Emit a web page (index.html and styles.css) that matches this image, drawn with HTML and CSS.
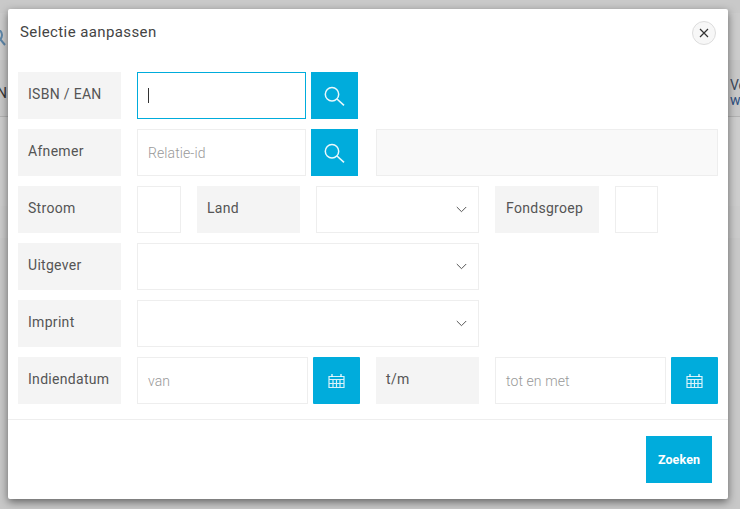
FILE: index.html
```html
<!DOCTYPE html>
<html lang="nl">
<head>
<meta charset="utf-8">
<title>Selectie aanpassen</title>
<link rel="stylesheet" href="styles.css">
</head>
<body>
<div class="page">
  <div class="bg-top"></div>
  <div class="bg-search"><svg class="bg-icon" width="8" height="18" viewBox="0 0 8 18"><circle cx="-4" cy="5" r="6" fill="none" stroke="#5d86a8" stroke-width="2"/><path d="M0 9l5 6" stroke="#5d86a8" stroke-width="2"/></svg></div>
  <div class="bg-gap"></div>
  <div class="bg-band"><span class="bg-n">N</span><span class="bg-v">Ve<br><b>w</b></span></div>
  <div class="bg-mid"></div>
  <div class="bg-line"></div>
  <div class="bg-rest"></div>
</div>
<div class="modal">
  <header class="head">
    <h1 class="title">Selectie aanpassen</h1>
    <button class="close" aria-label="Sluiten"><svg width="10" height="10" viewBox="0 0 10 10"><path d="M1 1l8 8M9 1l-8 8" stroke="#333" stroke-width="1.2"/></svg></button>
  </header>
  <div class="body">
    <div class="row">
      <div class="label">ISBN / EAN</div>
      <div class="input focus w169"><span class="caret"></span></div>
      <button class="btn gap5"><svg class="i-search" width="22" height="22" viewBox="0 0 22 22"><circle cx="8" cy="9.3" r="6.7" fill="none" stroke="#eaf8fc" stroke-width="1.5"/><path d="M13 14l7 6.3" stroke="#eaf8fc" stroke-width="1.6"/></svg></button>
    </div>
    <div class="row">
      <div class="label">Afnemer</div>
      <div class="input w169"><span class="ph">Relatie-id</span></div>
      <button class="btn gap5"><svg class="i-search" width="22" height="22" viewBox="0 0 22 22"><circle cx="8" cy="9.3" r="6.7" fill="none" stroke="#eaf8fc" stroke-width="1.5"/><path d="M13 14l7 6.3" stroke="#eaf8fc" stroke-width="1.6"/></svg></button>
      <div class="input readonly"></div>
    </div>
    <div class="row">
      <div class="label">Stroom</div>
      <div class="input w44"></div>
      <div class="label">Land</div>
      <div class="input select w163"><svg width="11" height="7" viewBox="0 0 11 7"><path d="M.8 1l4.7 4.7L10.2 1" fill="none" stroke="#555" stroke-width="1"/></svg></div>
      <div class="label wide">Fondsgroep</div>
      <div class="input w43"></div>
    </div>
    <div class="row">
      <div class="label">Uitgever</div>
      <div class="input select w342"><svg width="11" height="7" viewBox="0 0 11 7"><path d="M.8 1l4.7 4.7L10.2 1" fill="none" stroke="#555" stroke-width="1"/></svg></div>
    </div>
    <div class="row">
      <div class="label">Imprint</div>
      <div class="input select w342"><svg width="11" height="7" viewBox="0 0 11 7"><path d="M.8 1l4.7 4.7L10.2 1" fill="none" stroke="#555" stroke-width="1"/></svg></div>
    </div>
    <div class="row">
      <div class="label">Indiendatum</div>
      <div class="input w171"><span class="ph">van</span></div>
      <button class="btn gap5 rounded"><svg width="17" height="14" viewBox="0 0 17 14"><path d="M1 2.5h15v11H1zM1 5.5h15M1 9.5h15M5 5.5v8M8.5 5.5v8M12 5.5v8" fill="none" stroke="#d8f2fa" stroke-width="1.2"/><path d="M4 0v3M13 0v3" stroke="#fff" stroke-width="1.2"/></svg></button>
      <div class="label">t/m</div>
      <div class="input w171"><span class="ph">tot en met</span></div>
      <button class="btn gap5 rounded"><svg width="17" height="14" viewBox="0 0 17 14"><path d="M1 2.5h15v11H1zM1 5.5h15M1 9.5h15M5 5.5v8M8.5 5.5v8M12 5.5v8" fill="none" stroke="#d8f2fa" stroke-width="1.2"/><path d="M4 0v3M13 0v3" stroke="#fff" stroke-width="1.2"/></svg></button>
    </div>
  </div>
  <footer class="foot"><button class="submit">Zoeken</button></footer>
</div>
</body>
</html>
```
FILE: styles.css
```css
* { box-sizing: border-box; }
html, body { margin: 0; height: 100%; overflow: hidden; background: #cccccc; font-family: Roboto, "Liberation Sans", sans-serif; }
.page { width: 740px; height: 509px; display: flex; flex-direction: column; }
.bg-top { height: 13px; background: #c9c9c9; }
.bg-search { height: 47px; background: #cccccc; overflow: hidden; }
.bg-icon { display: block; margin-top: 17px; }
.bg-gap { height: 10px; background: #c7c7c7; }
.bg-band { height: 47px; background: #c8c8c8; border-bottom: 1px solid #b2b2b2; display: flex; justify-content: space-between; align-items: center; font-size: 14px; line-height: 15px; color: #333; }
.bg-n { margin-left: -3px; }
.bg-v { width: 10px; overflow: hidden; color: #3d4a5c; white-space: nowrap; }
.bg-v b { font-weight: 400; color: #2d4f80; }
.bg-mid { height: 89px; background: #cdcdcd; }
.bg-line { height: 32px; background: #cbcbcb; }
.bg-rest { flex: 1; background: #c8c8c8; }

.modal { position: absolute; left: 8px; top: 9px; width: 720px; height: 490px; background: #fff; border-radius: 2px; box-shadow: 0 3px 9px rgba(0,0,0,.5); display: flex; flex-direction: column; }
.head { height: 63px; padding: 13px 12px 0 12px; display: flex; justify-content: space-between; align-items: flex-start; }
.title { margin: 0; font-size: 15px; font-weight: 400; line-height: 20px; letter-spacing: .4px; color: #444; }
.close { width: 24px; height: 24px; margin-top: -1px; padding: 0; border: 1px solid #ddd; border-radius: 50%; background: #f7f7f7; display: flex; align-items: center; justify-content: center; }
.body { padding: 0 10px; display: flex; flex-direction: column; gap: 10px; height: 348px; border-bottom: 1px solid #eee; }
.row { display: flex; height: 47px; }
.label { width: 103px; margin-right: 16px; padding: 14px 0 0 10px; background: #f4f4f4; font-size: 14px; line-height: 16px; font-weight: 400; letter-spacing: .3px; color: #555; white-space: nowrap; }
.row > .input + .label, .row > .btn + .label { margin-left: 16px; }
.wide { width: 104px; padding-left: 11px; }
.input { height: 47px; border: 1px solid #eee; background: #fff; padding: 0 10px; display: flex; align-items: center; }
.w169 { width: 169px; }
.w171 { width: 171px; }
.w44 { width: 44px; }
.w43 { width: 43px; }
.w163 { width: 163px; }
.w342 { width: 342px; }
.focus { border-color: #00acdc; }
.caret { width: 1px; height: 15px; background: #333; }
.ph { font-size: 14px; font-weight: 300; color: #999; letter-spacing: .1px; }
.readonly { flex: 1; margin-left: 18px; background: #f9f9f9; }
.select { justify-content: flex-end; padding-right: 11px; }
.btn { width: 47px; height: 47px; border: 0; padding: 0; background: #00acdc; display: flex; align-items: center; justify-content: center; }
.gap5 { margin-left: 5px; }
.rounded { border-radius: 1px; }
.foot { flex: 1; display: flex; justify-content: flex-end; padding: 16px 16px 0 0; }
.submit { width: 66px; height: 47px; padding: 0; border: 0; background: #00acdc; color: #fff; font: 700 12.5px Roboto, "Liberation Sans", sans-serif; letter-spacing: .1px; }
```
